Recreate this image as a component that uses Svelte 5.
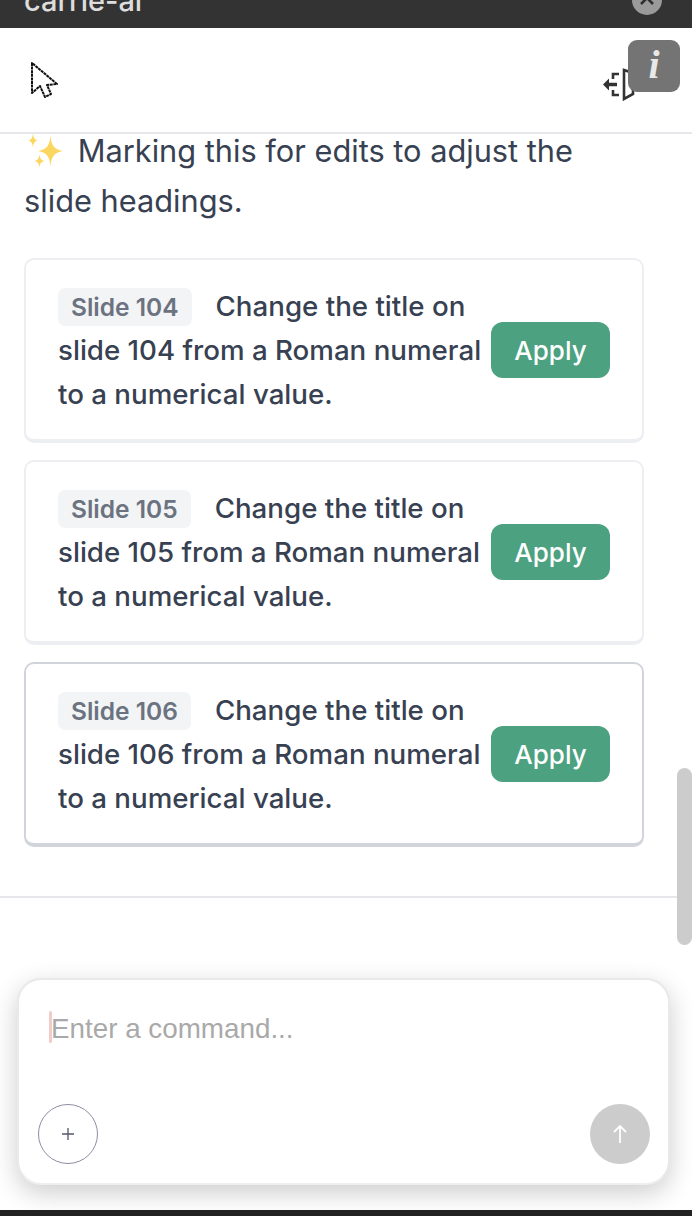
<script>
  let slides = [
    { id: 104, active: false },
    { id: 105, active: false },
    { id: 106, active: true }
  ];
</script>

<div class="page">
  <div class="titlebar">
    <span class="title">carrie-ai</span>
    <span class="close">
      <svg width="16" height="10" viewBox="0 0 16 10"><path d="M2 9 L8 3 L14 9" fill="none" stroke="#2e2e2e" stroke-width="2.6" /></svg>
    </span>
  </div>

  <header class="head">
    <svg class="cursor" width="30" height="38" viewBox="0 0 30 38">
      <path d="M2 2 V32 L10 25 L15 36 L21 33 L17 24 L27 23 Z" fill="#fff" stroke="#111" stroke-width="2" stroke-dasharray="3 0.6" stroke-linejoin="round" />
    </svg>
    <svg class="exit" width="36" height="34" viewBox="0 0 36 34">
      <path d="M17 7 H11 V12 M11 23 V28 H17" fill="none" stroke="#333" stroke-width="2.600" />
      <path d="M1 17.500 L7 11.500 V15.800 H15 V19.200 H7 V23.500 Z" fill="#333" />
      <path d="M22 3 L31 6 V27 L22 32 Z" fill="#fff" stroke="#333" stroke-width="2.600" />
    </svg>
  </header>

  <main class="content">
    <p class="intro">
      <svg class="sparkle" width="40" height="36" viewBox="0 0 40 36">
        <path d="M26.500 3 C27.300 14 30 17 39 19 C30 21 27.300 24 26.500 35 C25.700 24 23 21 14 19 C23 17 25.700 14 26.500 3 Z" fill="#fcd75f" />
        <path d="M9 1 C9.500 6 10.500 7.800 14 8.500 C10.500 9.200 9.500 11 9 16 C8.500 11 7.500 9.200 4 8.500 C7.500 7.800 8.500 6 9 1 Z" fill="#fcd75f" />
        <path d="M15.500 22 C16 26.500 17 28.300 21 29 C17 29.700 16 31.500 15.500 36 C15 31.500 14 29.700 10 29 C14 28.300 15 26.500 15.500 22 Z" fill="#fcd75f" />
      </svg>
      Marking this for edits to adjust the slide headings.
    </p>

    <div class="cards">
      {#each slides as s}
        <div class="card" class:active={s.active}>
          <div class="text">
            <span class="tag">Slide {s.id}</span>Change the title on slide {s.id} from a Roman numeral to a numerical value.
          </div>
          <button class="apply">Apply</button>
        </div>
      {/each}
    </div>
  </main>

  <div class="composer-wrap">
    <div class="composer">
      <div class="input"><span class="caret"></span>Enter a command...</div>
      <div class="actions">
        <button class="plus">
          <svg width="14" height="14" viewBox="0 0 14 14"><path d="M7 1 V13 M1 7 H13" stroke="#55556f" stroke-width="1.300" /></svg>
        </button>
        <button class="send">
          <svg width="16" height="20" viewBox="0 0 16 20"><path d="M8 19 V2 M2 8 L8 2 L14 8" fill="none" stroke="#fff" stroke-width="1.800" /></svg>
        </button>
      </div>
    </div>
  </div>
  <div class="bottombar"></div>

  <div class="info">i</div>
  <div class="scrollbar"></div>
</div>

<style>
  :global(body) {
    margin: 0;
    background: #fff;
  }

  .page {
    position: relative;
    width: 692px;
    height: 1216px;
    overflow: hidden;
    display: flex;
    flex-direction: column;
    font-family: Inter, "Liberation Sans", sans-serif;
    color: #374151;
  }

  .titlebar {
    height: 28px;
    flex: none;
    background: #333;
    display: flex;
    justify-content: space-between;
    align-items: flex-end;
    padding: 0 30px 0 24px;
    overflow: hidden;
  }
  .title {
    font-size: 29px;
    font-weight: 500;
    line-height: 30px;
    margin-bottom: 12px;
    color: #ddd;
  }
  .close {
    width: 30px;
    height: 30px;
    border-radius: 50%;
    background: #9a9a9a;
    margin-bottom: 13px;
    display: flex;
    align-items: center;
    justify-content: center;
    flex: none;
  }

  .head {
    height: 104px;
    flex: none;
    border-bottom: 2px solid #e5e7eb;
    display: flex;
    justify-content: space-between;
    align-items: center;
    padding: 0 54px 0 30px;
  }
  .cursor {
    margin-top: -1px;
  }
  .exit {
    margin-top: 8px;
  }

  .content {
    flex: none;
    height: 764px;
    border-bottom: 2px solid #e5e7eb;
    box-sizing: border-box;
    padding: 0 48px 0 24px;
  }
  .intro {
    margin: -8px 0 0;
    font-size: 30.750px;
    line-height: 50px;
    color: #374151;
  }
  .sparkle {
    vertical-align: -6px;
    margin-right: 5px;
  }

  .cards {
    margin-top: 32px;
    display: flex;
    flex-direction: column;
    gap: 17px;
  }
  .card {
    box-sizing: border-box;
    height: 185px;
    border: 2px solid #eceef2;
    border-bottom-width: 4px;
    border-radius: 10px;
    padding: 0 32px;
    display: flex;
    align-items: center;
    gap: 8px;
  }
  .card.active {
    border-color: #d1d5db;
  }
  .text {
    width: 425px;
    flex: none;
    font-size: 27.700px;
    font-weight: 500;
    line-height: 44px;
    margin-top: 1px;
  }
  .tag {
    display: inline-block;
    height: 38px;
    line-height: 38px;
    padding: 0 13px;
    margin-right: 24px;
    background: #f3f4f6;
    border-radius: 7px;
    color: #6b7280;
    font-size: 24.500px;
    font-weight: 600;
  }
  .apply {
    width: 119px;
    height: 56px;
    flex: none;
    border: none;
    border-radius: 12px;
    background: #4ba180;
    color: #fff;
    font-family: inherit;
    font-size: 26px;
    font-weight: 500;
    padding: 0;
    margin-top: 1px;
  }

  .composer-wrap {
    flex: 1;
    padding: 80px 22px 0 17px;
  }
  .composer {
    box-sizing: border-box;
    height: 207px;
    border: 2px solid #e9e9e9;
    border-bottom-color: #eeeeee;
    border-radius: 24px;
    padding: 0 18px 19px 19px;
    background: #fff;
    box-shadow: 0 8px 26px rgba(0, 0, 0, 0.2);
    display: flex;
    flex-direction: column;
    justify-content: space-between;
  }
  .input {
    position: relative;
    padding: 31px 0 0 13px;
    font-family: "Liberation Sans", Arial, sans-serif;
    font-size: 27.800px;
    line-height: 36px;
    color: #a9a9a9;
  }
  .caret {
    position: absolute;
    left: 11px;
    top: 31px;
    width: 3px;
    height: 32px;
    background: #f0cdc8;
    border-radius: 2px;
  }
  .actions {
    display: flex;
    justify-content: space-between;
  }
  .plus, .send {
    width: 60px;
    height: 60px;
    border-radius: 50%;
    padding: 0;
    display: flex;
    align-items: center;
    justify-content: center;
  }
  .plus {
    border: 1px solid #8d8da3;
    background: #fff;
  }
  .send {
    border: none;
    background: #ccc;
  }

  .bottombar {
    height: 6px;
    flex: none;
    background: #222;
  }

  .info {
    position: absolute;
    left: 628px;
    top: 40px;
    width: 52px;
    height: 52px;
    border-radius: 9px;
    background: #747474;
    color: #e8e8e8;
    font-family: "Liberation Serif", serif;
    font-style: italic;
    font-weight: 700;
    font-size: 40px;
    line-height: 50px;
    text-align: center;
  }
  .scrollbar {
    position: absolute;
    left: 677px;
    top: 768px;
    width: 15px;
    height: 177px;
    border-radius: 8px;
    background: #ccc;
  }
</style>
